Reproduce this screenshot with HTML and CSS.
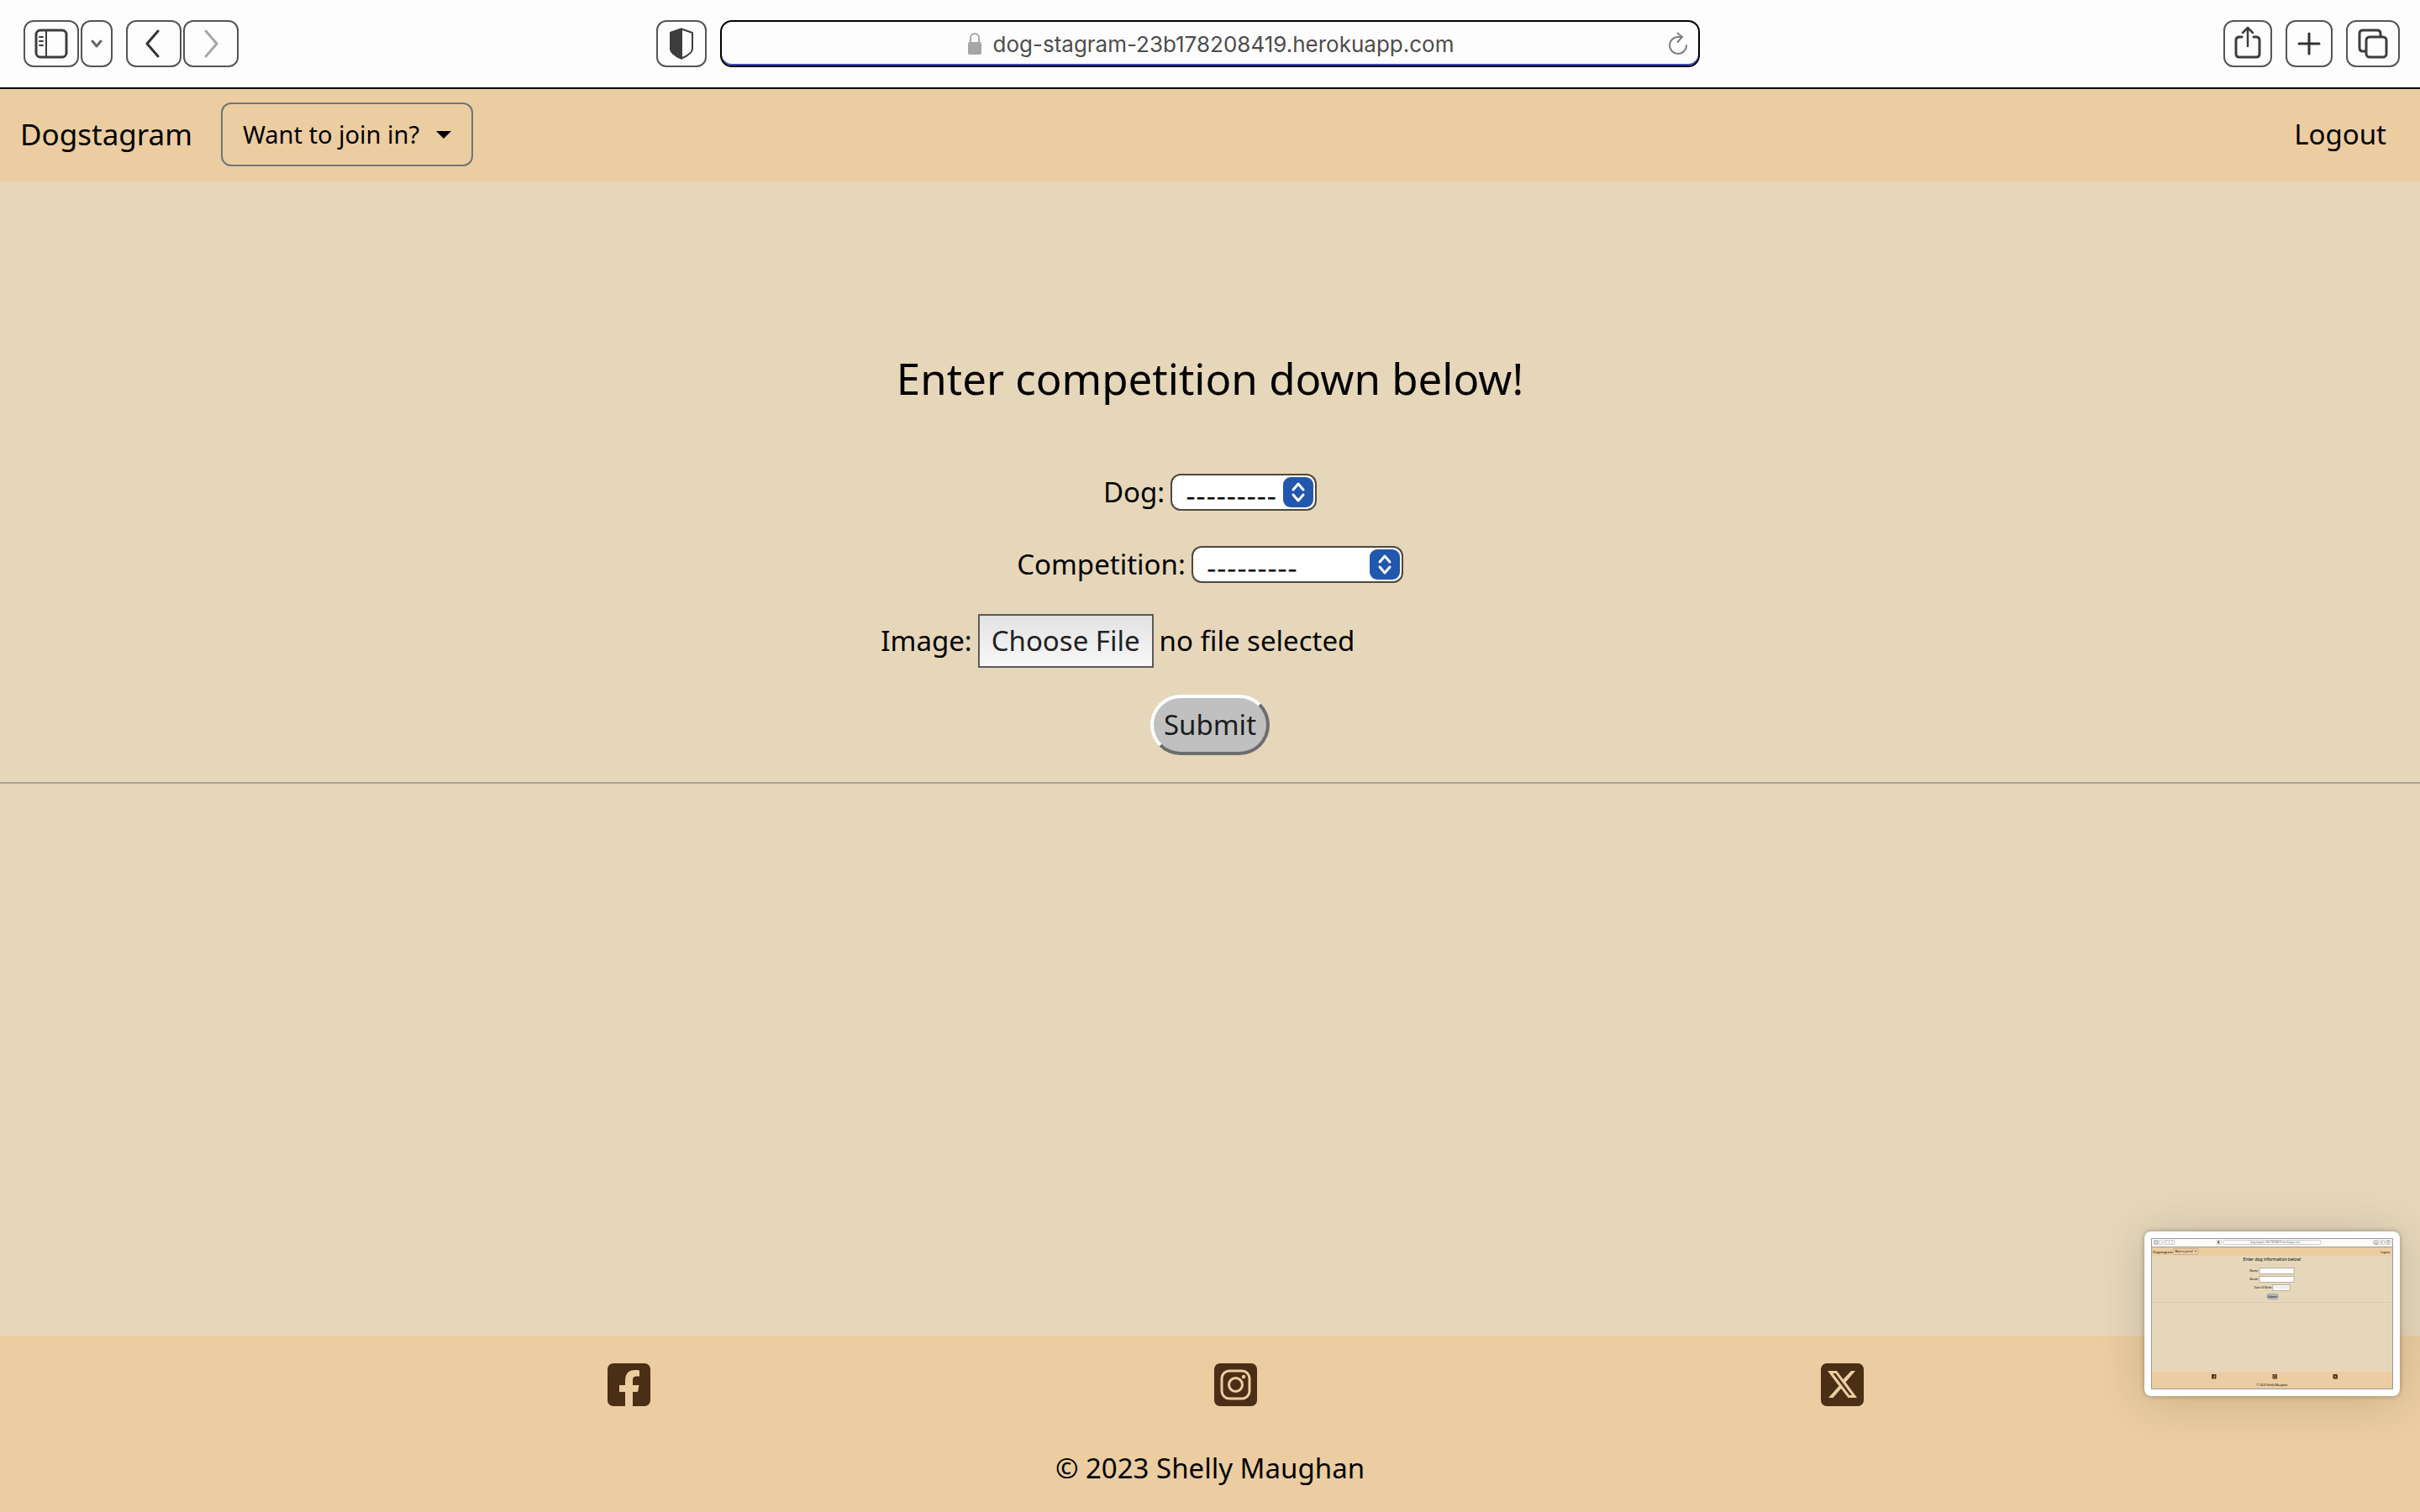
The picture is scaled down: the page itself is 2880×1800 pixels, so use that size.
FILE: index.html
```html
<!DOCTYPE html>
<html lang="en">
<head>
<meta charset="utf-8">
<title>Dogstagram</title>
<link rel="stylesheet" href="styles.css">
</head>
<body>
<div class="toolbar">
  <div class="toolbar-side toolbar-left">
    <div class="button-pair">
      <button class="tool tool-wide" type="button" aria-label="Show sidebar">
        <svg width="40" height="36" viewBox="0 0 40 36" fill="none" stroke="#3d3d3d" stroke-width="3" stroke-linecap="round"><rect x="2" y="2" width="36" height="32" rx="5"/><path d="M14 2v32" stroke-width="2"/><path d="M6 10h4M6 15h4M6 20h4" stroke-width="2"/></svg>
      </button>
      <button class="tool tool-narrow" type="button" aria-label="Tab groups">
        <svg width="14" height="10" viewBox="0 0 14 10" fill="none" stroke="#66666b" stroke-width="3" stroke-linecap="round" stroke-linejoin="round"><path d="M2 2l5 6 5-6"/></svg>
      </button>
    </div>
    <div class="button-pair nav-pair">
      <button class="tool tool-wide" type="button" aria-label="Back">
        <svg width="20" height="34" viewBox="0 0 20 34" fill="none" stroke="#333" stroke-width="3" stroke-linecap="round" stroke-linejoin="round"><path d="M15 2L2 17l13 15"/></svg>
      </button>
      <button class="tool tool-wide" type="button" aria-label="Forward">
        <svg width="18" height="34" viewBox="0 0 18 34" fill="none" stroke="#a6a6a6" stroke-width="3" stroke-linecap="round" stroke-linejoin="round"><path d="M3 2l13 15L3 32"/></svg>
      </button>
    </div>
    <button class="tool tool-shield" type="button" aria-label="Privacy report">
      <svg width="28" height="38" viewBox="0 0 28 38" fill="none" stroke="#3d3d3d" stroke-width="2" stroke-linejoin="round"><path d="M14 1.500L27 6v19c0 5-7 9-13 11.500C8 34 1 30 1 25V6z"/><path d="M14 1.500v35C8 34 1 30 1 25V6z" fill="#3d3d3d"/></svg>
    </button>
  </div>
  <div class="address">
    <span class="address-text">
      <svg width="16" height="26" viewBox="0 0 16 26"><path d="M3 12V6a5 5 0 0 1 10 0v6" fill="none" stroke="#a6a6a6" stroke-width="2"/><rect y="11" width="16" height="15" rx="2" fill="#a6a6a6"/></svg>
      <input class="address-input" type="text" aria-label="Address" value="dog-stagram-23b178208419.herokuapp.com">
    </span>
    <button class="reload" type="button" aria-label="Reload">
      <svg width="24" height="28" viewBox="0 0 24 28" fill="none" stroke="#808080" stroke-width="2" stroke-linecap="round" stroke-linejoin="round"><path d="M22 16a10 10 0 1 1-10-10h5"/><path d="M11.500 1.500L17 6l-5.500 6"/></svg>
    </button>
  </div>
  <div class="toolbar-side toolbar-right">
    <button class="tool tool-share" type="button" aria-label="Share">
      <svg width="32" height="42" viewBox="0 0 32 42" fill="none" stroke="#3d3d3d" stroke-width="3" stroke-linecap="round" stroke-linejoin="round"><path d="M9 13H6q-4 0-4 4v16q0 4 4 4h20q4 0 4-4V17q0-4-4-4h-3"/><path d="M16 24V2M10 8l6-6 6 6" stroke-width="2.500"/></svg>
    </button>
    <button class="tool tool-plus" type="button" aria-label="New tab">
      <svg width="28" height="28" viewBox="0 0 28 28" fill="none" stroke="#333" stroke-width="3" stroke-linecap="round"><path d="M14 2v24M2 14h24"/></svg>
    </button>
    <button class="tool tool-tabs" type="button" aria-label="Tab overview">
      <svg width="36" height="36" viewBox="0 0 36 36" fill="none" stroke="#3d3d3d" stroke-width="3" stroke-linejoin="round"><path d="M9 27H6q-4 0-4-4V6q0-4 4-4h17q4 0 4 4v3"/><rect x="10" y="10" width="24" height="24" rx="4"/></svg>
    </button>
  </div>
</div>

<nav class="navbar">
  <a class="brand" href="#">Dogstagram</a>
  <button class="join" type="button">Want to join in?<span class="caret"></span></button>
  <a class="logout" href="#">Logout</a>
</nav>

<main class="content">
  <h1 class="title">Enter competition down below!</h1>
  <form class="entry-form">
    <div class="row">
      <label for="dog">Dog:</label>
      <span class="select-wrap">
        <select class="select select-dog" id="dog"><option>---------</option></select>
        <svg class="stepper" width="36" height="36" viewBox="0 0 36 36"><rect width="36" height="36" rx="9" fill="#2257ae"/><path d="M12 15l6-7 6 7M12 21l6 7 6-7" fill="none" stroke="#fff" stroke-width="3" stroke-linecap="round" stroke-linejoin="round"/></svg>
      </span>
    </div>
    <div class="row">
      <label for="competition">Competition:</label>
      <span class="select-wrap">
        <select class="select select-competition" id="competition"><option>---------</option></select>
        <svg class="stepper" width="36" height="36" viewBox="0 0 36 36"><rect width="36" height="36" rx="9" fill="#2257ae"/><path d="M12 15l6-7 6 7M12 21l6 7 6-7" fill="none" stroke="#fff" stroke-width="3" stroke-linecap="round" stroke-linejoin="round"/></svg>
      </span>
    </div>
    <div class="row">
      <label for="image">Image:</label>
      <span class="file">
        <span class="file-button">Choose File</span>
        <span>no file selected</span>
        <input class="file-input" type="file" id="image">
      </span>
    </div>
    <button class="submit" type="submit">Submit</button>
  </form>
  <hr class="rule">
</main>

<footer class="footer">
  <ul class="social">
    <li><a href="#" aria-label="Facebook"><svg width="51" height="51" viewBox="0 0 51 51"><rect width="51" height="51" rx="7" fill="#4a2e16"/><path d="M21 51V34h-7v-8h7v-5c0-9 4-13 12-13 2 0 4 0 5 .500v7h-3c-4 0-5 1.500-5 5V26h7.500L36 34h-6v17z" fill="#eccda1"/></svg></a></li>
    <li><a href="#" aria-label="Instagram"><svg width="51" height="51" viewBox="0 0 51 51" fill="none" stroke="#eccda1" stroke-width="3"><rect width="51" height="51" rx="7" fill="#4a2e16" stroke="none"/><rect x="9" y="9" width="33" height="33" rx="9"/><circle cx="25.500" cy="25.500" r="8"/><circle cx="35" cy="16" r="2.200" fill="#eccda1" stroke="none"/></svg></a></li>
    <li><a href="#" aria-label="X"><svg width="51" height="51" viewBox="0 0 51 51"><rect width="51" height="51" rx="7" fill="#4a2e16"/><path d="M36 9h5L29.500 22.500 43 41H32.500L24 30 14.500 41h-5.500L21.500 27 8 9h11l7.500 10zM34 38h3L17.500 12h-3.200z" fill="#eccda1"/></svg></a></li>
  </ul>
  <p class="copyright">© 2023 Shelly Maughan</p>
</footer>

<div class="preview">
  <svg class="preview-page" viewBox="0 0 288 180" font-size="4">
    <rect width="288" height="180" fill="#e6d7ba"/>
    <rect width="288" height="10" fill="#fdfdfd"/>
    <path d="M0 10.500h288" stroke="#a39a88"/>
    <rect y="11" width="288" height="10" fill="#eccda1"/>
    <g fill="#fff" stroke="#999" stroke-width=".5">
      <rect x="3" y="2.500" width="6" height="5" rx="1"/><rect x="9.500" y="2.500" width="3.500" height="5" rx="1"/>
      <rect x="15" y="2.500" width="6.500" height="5" rx="1"/><rect x="21.500" y="2.500" width="6.500" height="5" rx="1"/>
      <rect x="78" y="2.500" width="6" height="5" rx="1"/><rect x="86" y="2.500" width="116" height="5" rx="1.500"/>
      <rect x="264.500" y="2.500" width="6" height="5" rx="1"/><rect x="272" y="2.500" width="5.500" height="5" rx="1"/><rect x="279" y="2.500" width="6.500" height="5" rx="1"/>
    </g>
    <g fill="none" stroke="#555" stroke-width=".5"><path d="M4.500 3.500h3v3h-3zM18.500 3.500L17 5l1.500 1.500M24.500 3.500L26 5l-1.500 1.500M266 4h3v3h-3zM273.500 5h2.500M274.700 3.800v2.500M281 3.500h2.500v2.500H281z"/><path d="M81 3.500v3l-1.500-1V4z" fill="#333"/></g>
    <text x="118" y="6" font-size="2.800" fill="#555">dog-stagram-23b178208419.herokuapp.com</text>
    <text x="2" y="17.500">Dogstagram</text>
    <rect x="26.500" y="12.500" width="29.500" height="7" rx="1" fill="none" stroke="#a5937a" stroke-width=".5"/>
    <text x="28.500" y="17" font-size="3">Want to join in?</text><path d="M52 15h2l-1 1.200z"/>
    <text x="273" y="17.500" font-size="3.400">Logout</text>
    <text x="144" y="27" font-size="5" text-anchor="middle">Enter dog information below!</text>
    <g font-size="3.300" text-anchor="end"><text x="127.500" y="40">Name:</text><text x="127.500" y="50">Breed:</text><text x="144" y="60">Date Of Birth:</text></g>
    <g fill="#fff" stroke="#938b7b" stroke-width=".6"><rect x="129" y="35.500" width="41" height="7"/><rect x="129" y="45.500" width="41" height="7"/><rect x="145" y="55.500" width="20" height="7"/></g>
    <text x="146" y="60" font-size="3.300" fill="#bbb">10/12/2023</text>
    <rect x="137.500" y="66" width="14" height="7" rx="3.500" fill="#b5b5b5" stroke="#999" stroke-width=".4"/>
    <text x="144.500" y="70.500" font-size="3.300" text-anchor="middle">Submit</text>
    <path d="M0 76.500h288" stroke="#d3c5aa" stroke-width=".6"/>
    <rect y="159" width="288" height="21" fill="#eccda1"/>
    <g fill="#4a2e16"><rect x="72" y="162" width="5.500" height="5.500" rx=".8"/><rect x="144.500" y="162" width="5.500" height="5.500" rx=".8"/><rect x="216.500" y="162" width="5.500" height="5.500" rx=".8"/></g>
    <g fill="none" stroke="#eccda1" stroke-width=".6"><path d="M75 167.500v-3q0-1 1.200-1M74 165h2.200"/><rect x="145.700" y="163.200" width="3" height="3" rx=".8"/><path d="M218 163.500l2.500 2.500M220.500 163.500L218 166"/></g>
    <text x="144" y="176" font-size="3.300" text-anchor="middle">© 2023 Shelly Maughan</text>
  </svg>
</div>
</body>
</html>
```
FILE: styles.css
```css
* { box-sizing: border-box; }

body {
  margin: 0;
  min-height: 100vh;
  display: flex;
  flex-direction: column;
  background: #e6d7ba;
  color: #000;
  font-family: "Noto Sans", sans-serif;
  font-size: 33px;
  line-height: 48px;
}

a { color: inherit; text-decoration: none; }
button, input, select { font: inherit; color: inherit; }
svg { display: block; }

/* Browser toolbar */
.toolbar {
  display: grid;
  grid-template-columns: 1fr minmax(0, 1166px) 1fr;
  column-gap: 16px;
  align-items: center;
  padding: 24px;
  background: #fdfdfd;
  border-bottom: 2px solid #000;
}
.toolbar-side { display: flex; gap: 16px; }
.toolbar-left { padding-left: 4px; }
.toolbar-right { justify-content: flex-end; }
.button-pair { display: flex; gap: 2px; }
.tool {
  display: flex;
  align-items: center;
  justify-content: center;
  height: 56px;
  padding: 0;
  background: #fdfdfd;
  border: 2px solid #555;
  border-radius: 12px;
}
.tool-wide { width: 66px; }
.tool-narrow { width: 38px; }
.tool-shield { width: 60px; margin-left: auto; }
.tool-share { width: 58px; }
.tool-plus { width: 56px; }
.tool-tabs { width: 64px; }
.address {
  display: flex;
  align-items: center;
  height: 56px;
  padding: 0 12px;
  border: 2px solid #000;
  border-radius: 14px;
  box-shadow: inset 0 -2px #3c49b8;
}
.address-text {
  flex: 1;
  display: flex;
  align-items: center;
  justify-content: center;
  gap: 14px;
  padding-left: 26px;
}
.address-input {
  field-sizing: content;
  padding: 2px 0 0;
  border: 0;
  background: none;
  color: #4d4d4d;
  font-family: Inter, sans-serif;
  font-size: 26px;
}
.reload { padding: 0; border: 0; background: none; }

/* Site navigation */
.navbar {
  display: flex;
  align-items: center;
  padding: 16px 40px 18px 24px;
  background: #eccda1;
}
.brand { font-size: 35px; margin-right: 34px; }
.join {
  display: flex;
  align-items: center;
  gap: 20px;
  height: 76px;
  padding: 0 24px;
  background: none;
  border: 2px solid #6c757d;
  border-radius: 12px;
  font-size: 29px;
}
.caret {
  border: 9px solid transparent;
  border-top-color: #000;
  border-bottom: 0;
}
.logout { margin-left: auto; }

/* Competition entry */
.content { flex: 1; padding-top: 200px; }
.title {
  margin: 0 0 75px;
  font-size: 51px;
  font-weight: 400;
  line-height: 68px;
  text-align: center;
}
.entry-form {
  display: flex;
  flex-direction: column;
  align-items: center;
  gap: 32px;
}
.row {
  display: flex;
  align-items: center;
  gap: 7px;
  min-height: 54px;
}
.select-wrap { position: relative; }
.select {
  display: block;
  appearance: none;
  height: 44px;
  padding: 6px 16px 0;
  background: #fff;
  border: 2px solid #4d483e;
  border-radius: 12px;
  color: #000;
  font-family: Inter, sans-serif;
  font-size: 26px;
  font-weight: 500;
  line-height: 40px;
}
.select-dog { width: 174px; }
.select-competition { width: 252px; }
.stepper {
  position: absolute;
  top: 4px;
  right: 4px;
  pointer-events: none;
}
.file {
  position: relative;
  display: flex;
  align-items: center;
  gap: 7px;
  width: 668px;
}
.file-button {
  padding: 6px 14px;
  background: linear-gradient(#e2e2e2, #f8f8f8);
  border: 2px solid #5a5a5a;
  color: #222;
}
.file-input { position: absolute; inset: 0; width: 100%; opacity: 0; }
.submit {
  height: 72px;
  padding: 0 12px;
  background: #c0c0c0;
  border: 4px solid;
  border-color: #fff #6d6d6d #6d6d6d #fff;
  border-radius: 36px;
  color: #1c1c1c;
}
.rule {
  margin: 32px 0 0;
  border: 0;
  border-top: 2px solid #aca18b;
}

/* Footer */
.footer { padding: 33px 0 28px; background: #eccda1; }
.social {
  display: grid;
  grid-template-columns: repeat(3, 1fr);
  justify-items: center;
  margin: 0;
  padding: 0 327px 0 387px;
  list-style: none;
}
.copyright { margin: 50px 0 0; text-align: center; }

/* Floating capture thumbnail */
.preview {
  position: fixed;
  right: 24px;
  bottom: 138px;
  width: 304px;
  padding: 8px;
  background: #fff;
  border-radius: 8px;
  box-shadow: 0 4px 56px rgba(0, 0, 0, .16), 0 0 6px rgba(0, 0, 0, .3);
}
.preview-page { width: 100%; outline: 1px solid #999; outline-offset: -1px; }
```
